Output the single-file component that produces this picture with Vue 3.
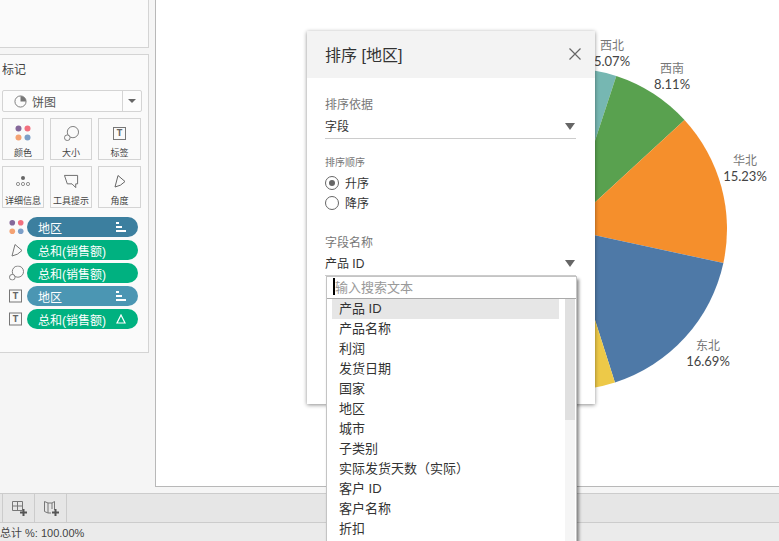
<script setup>
const cx = 566
const cy = 229
const r = 161

// angles in degrees, clockwise from north
const slices = [
  { color: '#76b7b2', from: 0, to: 18.2 },
  { color: '#59a14f', from: 18.2, to: 47.4 },
  { color: '#f58f2c', from: 47.4, to: 102.2 },
  { color: '#4e79a7', from: 102.2, to: 162.3 },
  { color: '#edc948', from: 162.3, to: 200 },
]

function slicePath(s) {
  const a = (s.from * Math.PI) / 180
  const b = (s.to * Math.PI) / 180
  const x1 = cx + r * Math.sin(a)
  const y1 = cy - r * Math.cos(a)
  const x2 = cx + r * Math.sin(b)
  const y2 = cy - r * Math.cos(b)
  return `M${cx} ${cy}L${x1.toFixed(2)} ${y1.toFixed(2)}A${r} ${r} 0 0 1 ${x2.toFixed(2)} ${y2.toFixed(2)}Z`
}

const labels = [
  { name: '西北', value: '5.07%', x: 612, y: 37 },
  { name: '西南', value: '8.11%', x: 672, y: 60 },
  { name: '华北', value: '15.23%', x: 745, y: 152 },
  { name: '东北', value: '16.69%', x: 708, y: 337 },
]

const fields = ['产品 ID', '产品名称', '利润', '发货日期', '国家', '地区', '城市', '子类别', '实际发货天数（实际）', '客户 ID', '客户名称', '折扣']
</script>

<template>
  <div class="app">
    <div class="main">
      <aside class="sidebar">
        <div class="top-card"></div>
        <div class="marks">
          <div class="marks-title">标记</div>
          <div class="mark-select">
            <div class="mark-type">
              <svg width="13" height="13" viewBox="0 0 14 14">
                <circle cx="7" cy="7" r="6" fill="none" stroke="#777" />
                <path d="M7 7V1A6 6 0 0 1 13 7Z" fill="#777" />
              </svg>
              <span>饼图</span>
            </div>
            <div class="mark-arrow"><i class="tri small"></i></div>
          </div>
          <div class="mark-grid">
            <div class="mark-btn">
              <div class="btn-icon">
                <svg width="16" height="16" viewBox="0 0 16 16">
                  <circle cx="3.5" cy="3.5" r="3" fill="#85689a" />
                  <circle cx="12.5" cy="3.5" r="3" fill="#f2707f" />
                  <circle cx="3.5" cy="12.5" r="3" fill="#f4a273" />
                  <circle cx="12.5" cy="12.5" r="3" fill="#7d9fc8" />
                </svg>
              </div>
              <span>颜色</span>
            </div>
            <div class="mark-btn">
              <div class="btn-icon">
                <svg width="15" height="15" viewBox="0 0 16 16">
                  <circle cx="9.5" cy="6.5" r="6" fill="none" stroke="#777" />
                  <circle cx="3.5" cy="12.5" r="3" fill="#fafafa" stroke="#777" />
                </svg>
              </div>
              <span>大小</span>
            </div>
            <div class="mark-btn">
              <div class="btn-icon"><div class="t-icon">T</div></div>
              <span>标签</span>
            </div>
            <div class="mark-btn">
              <div class="btn-icon">
                <svg width="16" height="16" viewBox="0 0 16 16">
                  <circle cx="8" cy="5" r="2" fill="#666" />
                  <circle cx="3" cy="11" r="1.6" fill="none" stroke="#777" stroke-width=".8" />
                  <circle cx="8" cy="11" r="1.6" fill="none" stroke="#777" stroke-width=".8" />
                  <circle cx="13" cy="11" r="1.6" fill="none" stroke="#777" stroke-width=".8" />
                </svg>
              </div>
              <span>详细信息</span>
            </div>
            <div class="mark-btn">
              <div class="btn-icon">
                <svg width="15" height="15" viewBox="0 0 16 16">
                  <path d="M.5 1.5H14.5V10.5H12.5V14.5L8.5 10.5H3.5Z" fill="none" stroke="#666" />
                </svg>
              </div>
              <span>工具提示</span>
            </div>
            <div class="mark-btn">
              <div class="btn-icon">
                <svg width="12" height="14" viewBox="0 0 12 14">
                  <path d="M1 13L4 1.5L11 7.5Q7 12 1 13Z" fill="none" stroke="#666" />
                </svg>
              </div>
              <span>角度</span>
            </div>
          </div>
          <div class="shelf">
            <div class="shelf-row">
              <svg class="shelf-icon" width="15" height="15" viewBox="0 0 16 16">
                <circle cx="3.5" cy="3.5" r="3" fill="#85689a" />
                <circle cx="12.5" cy="3.5" r="3" fill="#f2707f" />
                <circle cx="3.5" cy="12.5" r="3" fill="#f4a273" />
                <circle cx="12.5" cy="12.5" r="3" fill="#7d9fc8" />
              </svg>
              <div class="pill blue">
                <span>地区</span>
                <i class="sort"><b></b><b></b><b></b></i>
              </div>
            </div>
            <div class="shelf-row">
              <svg class="shelf-icon angle" width="12" height="14" viewBox="0 0 12 14">
                <path d="M1 13L4 1.5L11 7.5Q7 12 1 13Z" fill="none" stroke="#777" />
              </svg>
              <div class="pill green"><span>总和(销售额)</span></div>
            </div>
            <div class="shelf-row">
              <svg class="shelf-icon" width="15" height="15" viewBox="0 0 16 16">
                <circle cx="9.5" cy="6.5" r="6" fill="none" stroke="#777" />
                <circle cx="3.5" cy="12.5" r="3" fill="#fafafa" stroke="#777" />
              </svg>
              <div class="pill green"><span>总和(销售额)</span></div>
            </div>
            <div class="shelf-row">
              <div class="shelf-icon t-icon">T</div>
              <div class="pill light-blue">
                <span>地区</span>
                <i class="sort"><b></b><b></b><b></b></i>
              </div>
            </div>
            <div class="shelf-row">
              <div class="shelf-icon t-icon">T</div>
              <div class="pill green">
                <span>总和(销售额)</span>
                <svg width="10" height="10" viewBox="0 0 10 10">
                  <path d="M5 1L9 9H1Z" fill="none" stroke="#fff" stroke-width="1.2" />
                </svg>
              </div>
            </div>
          </div>
        </div>
      </aside>
      <div class="view"></div>
    </div>

    <div class="tabs">
      <div class="tab-cell">
        <svg width="16" height="16" viewBox="0 0 16 16">
          <path d="M1.5 1.5H11.5V10.5H1.5ZM6.5 1.5V10.5M1.5 6H11.5" fill="none" stroke="#777" />
          <path d="M9 12.5H16M12.5 9V16" stroke="#555" stroke-width="2" />
        </svg>
      </div>
      <div class="tab-cell">
        <svg width="16" height="16" viewBox="0 0 16 16">
          <path d="M1.5 1.5L5 3H9L11.5 1.5V10M1.5 1.5V11.5L5 13H8M5 3V13M9 3V9" fill="none" stroke="#777" />
          <path d="M9 12.5H16M12.5 9V16" stroke="#555" stroke-width="2" />
        </svg>
      </div>
    </div>
    <div class="status">总计 %: 100.00%</div>

    <svg class="pie" width="779" height="487" viewBox="0 0 779 487">
      <path v-for="s in slices" :key="s.color" :d="slicePath(s)" :fill="s.color" />
    </svg>
    <div
      v-for="l in labels"
      :key="l.name"
      class="pie-label"
      :style="{ left: l.x - 40 + 'px', top: l.y + 'px' }"
    >
      <div class="pie-name">{{ l.name }}</div>
      <div>{{ l.value }}</div>
    </div>

    <div class="dialog">
      <div class="dialog-head">
        <span>排序 [地区]</span>
        <svg width="14" height="14" viewBox="0 0 14 14">
          <path d="M1.5 1.5L12.5 12.5M12.5 1.5L1.5 12.5" stroke="#666" stroke-width="1.2" fill="none" />
        </svg>
      </div>
      <div class="dialog-body">
        <div class="field-label">排序依据</div>
        <div class="combo">
          <span>字段</span>
          <i class="tri"></i>
        </div>
        <div class="order-label">排序顺序</div>
        <div class="radio-row">
          <i class="radio checked"></i>
          <span>升序</span>
        </div>
        <div class="radio-row">
          <i class="radio"></i>
          <span>降序</span>
        </div>
        <div class="field-label name-label">字段名称</div>
        <div class="combo">
          <span>产品 ID</span>
          <i class="tri"></i>
        </div>
      </div>
    </div>

    <div class="dropdown">
      <div class="search">
        <i class="caret"></i>
        <span>输入搜索文本</span>
      </div>
      <div class="list-wrap">
        <ul class="list">
          <li v-for="(f, i) in fields" :key="f" :class="{ active: i === 0 }">{{ f }}</li>
        </ul>
        <div class="scroll"><div class="thumb"></div></div>
      </div>
    </div>
  </div>
</template>

<style scoped>
.app {
  position: relative;
  width: 779px;
  height: 541px;
  overflow: hidden;
  display: flex;
  flex-direction: column;
  background: #f5f5f5;
  color: #333;
  font-family: "Liberation Sans", "Noto Sans CJK SC", sans-serif;
  font-size: 12px;
}

.main {
  display: flex;
  height: 493px;
  flex: none;
}

.sidebar {
  width: 155px;
  flex: none;
}

.top-card {
  width: 149px;
  height: 48px;
  background: #fafafa;
  border: 1px solid #d4d4d4;
  border-width: 0 1px 1px 0;
  box-sizing: border-box;
}

.marks {
  width: 149px;
  height: 299px;
  margin-top: 6px;
  box-sizing: border-box;
  background: #fafafa;
  border: 1px solid #d4d4d4;
  border-left: none;
  padding: 0 6px 0 2px;
}

.marks-title {
  line-height: 16px;
  margin-top: 7px;
  color: #444;
}

.mark-select {
  display: flex;
  height: 22px;
  margin-top: 12px;
  box-sizing: border-box;
  border: 1px solid #d4d4d4;
  border-radius: 2px;
  background: #fcfcfc;
}

.mark-type {
  flex: 1;
  display: flex;
  align-items: center;
  gap: 5px;
  padding-left: 11px;
  color: #555;
}

.mark-arrow {
  width: 18px;
  border-left: 1px solid #d4d4d4;
  display: flex;
  align-items: center;
  justify-content: center;
}

.mark-grid {
  display: grid;
  grid-template-columns: 42px 42px 43px;
  grid-auto-rows: 42px;
  column-gap: 6px;
  row-gap: 6px;
  margin-top: 6px;
}

.mark-btn {
  box-sizing: border-box;
  border: 1px solid #d4d4d4;
  display: flex;
  flex-direction: column;
  align-items: center;
  font-size: 9px;
  line-height: 12px;
  color: #444;
  white-space: nowrap;
}

.btn-icon {
  height: 28px;
  flex: none;
  display: flex;
  align-items: center;
  justify-content: center;
}

.t-icon {
  width: 13px;
  height: 13px;
  box-sizing: border-box;
  border: 1px solid #777;
  font-family: "Liberation Mono", monospace;
  font-size: 10px;
  font-weight: bold;
  line-height: 11px;
  text-align: center;
  color: #666;
}

.shelf {
  display: flex;
  flex-direction: column;
  gap: 3px;
  margin-top: 9px;
  padding-right: 4px;
}

.shelf-row {
  display: flex;
  align-items: center;
  height: 20px;
  position: relative;
  padding-left: 25px;
}

.shelf-icon {
  position: absolute;
  left: 7px;
  top: 50%;
  transform: translateY(-50%);
}

.shelf-icon.angle {
  left: 9px;
}

.pill {
  flex: 1;
  height: 20px;
  border-radius: 10px;
  color: #fff;
  display: flex;
  align-items: center;
  justify-content: space-between;
  padding: 0 12px 0 11px;
}

.blue {
  background: #3c7f9f;
}

.light-blue {
  background: #4b96b3;
}

.green {
  background: #00b180;
}

.sort {
  display: flex;
  flex-direction: column;
  align-items: flex-start;
  gap: 2px;
  width: 10px;
}

.sort b {
  display: block;
  height: 2px;
  background: #fff;
}

.sort b:nth-child(1) {
  width: 3px;
}

.sort b:nth-child(2) {
  width: 6px;
}

.sort b:nth-child(3) {
  width: 10px;
}

.view {
  flex: 1;
  height: 487px;
  box-sizing: border-box;
  background: #fff;
  border-left: 1px solid #b8b8b8;
  border-bottom: 1px solid #b8b8b8;
}

.tabs {
  display: flex;
  height: 30px;
  flex: none;
  box-sizing: border-box;
  background: #e6e6e6;
  border-top: 1px solid #ccc;
  border-bottom: 1px solid #ccc;
  padding-left: 2px;
}

.tab-cell {
  width: 31px;
  border-left: 1px solid #ccc;
  display: flex;
  align-items: center;
  justify-content: center;
}

.tab-cell:last-child {
  border-right: 1px solid #ccc;
}

.status {
  height: 18px;
  flex: none;
  background: #ebebeb;
  font-size: 11px;
  line-height: 21px;
  color: #444;
}

.pie {
  position: absolute;
  left: 0;
  top: 0;
}

.pie-label {
  position: absolute;
  width: 80px;
  text-align: center;
  font-family: Lato, "Noto Sans CJK SC", sans-serif;
  font-size: 13px;
  line-height: 16px;
  color: #444;
}

.pie-name {
  font-size: 12px;
  line-height: 15px;
  padding-top: 1px;
  color: #777;
}

.dialog {
  position: absolute;
  left: 307px;
  top: 31px;
  width: 288px;
  height: 373px;
  background: #fff;
  box-shadow: 0 1px 4px rgba(0, 0, 0, 0.45);
}

.dialog-head {
  height: 47px;
  background: #f3f3f3;
  display: flex;
  align-items: center;
  justify-content: space-between;
  padding: 0 13px 2px 18px;
  box-sizing: border-box;
  font-size: 16px;
}

.dialog-body {
  padding: 19px 19px 0 18px;
}

.field-label {
  line-height: 16px;
  color: #777;
}

.name-label {
  margin-top: 23px;
}

.combo {
  display: flex;
  align-items: center;
  justify-content: space-between;
  height: 22px;
  box-sizing: border-box;
  margin-top: 4px;
  padding-bottom: 4px;
  border-bottom: 1px solid #ccc;
}

.name-label + .combo {
  margin-top: 3px;
}

.tri {
  display: block;
  width: 0;
  height: 0;
  border-left: 5px solid transparent;
  border-right: 5px solid transparent;
  border-top: 7px solid #666;
  margin: 2px 1px 0 0;
}

.tri.small {
  border-left-width: 4px;
  border-right-width: 4px;
  border-top-width: 4px;
  margin: 0;
}

.order-label {
  margin-top: 17px;
  font-size: 10px;
  line-height: 14px;
  color: #777;
}

.radio-row {
  display: flex;
  align-items: center;
  gap: 6px;
  height: 20px;
}

.order-label + .radio-row {
  margin-top: 2px;
}

.radio {
  width: 14px;
  height: 14px;
  margin-top: 2px;
  box-sizing: border-box;
  border: 1px solid #666;
  border-radius: 50%;
  display: flex;
  align-items: center;
  justify-content: center;
}

.radio.checked::after {
  content: "";
  width: 6px;
  height: 6px;
  border-radius: 50%;
  background: #666;
}

.dropdown {
  position: absolute;
  left: 326px;
  top: 276px;
  width: 251px;
  height: 280px;
  box-sizing: border-box;
  background: #fff;
  border: 1px solid #c4c4c4;
  box-shadow: 2px 3px 3px rgba(0, 0, 0, 0.45);
}

.search {
  height: 22px;
  box-sizing: border-box;
  border-bottom: 1px solid #aaa;
  display: flex;
  align-items: center;
  padding: 0 0 2px 6px;
  font-size: 13px;
  color: #999;
}

.caret {
  width: 2px;
  height: 17px;
  background: #000;
}

.list-wrap {
  display: flex;
}

.list {
  list-style: none;
  margin: 0;
  padding: 0 0 0 5px;
  width: 233px;
  flex: none;
}

.list li {
  height: 20px;
  line-height: 20px;
  padding-left: 7px;
  font-size: 13px;
  color: #333;
  white-space: nowrap;
}

.list li.active {
  background: #e6e6e6;
  width: 227px;
  box-sizing: border-box;
}

.scroll {
  width: 10px;
  height: 260px;
  background: #f5f5f5;
}

.thumb {
  height: 121px;
  background: #e0e0e0;
}
</style>

<style>
html,
body {
  margin: 0;
  background: #fff;
}
</style>
